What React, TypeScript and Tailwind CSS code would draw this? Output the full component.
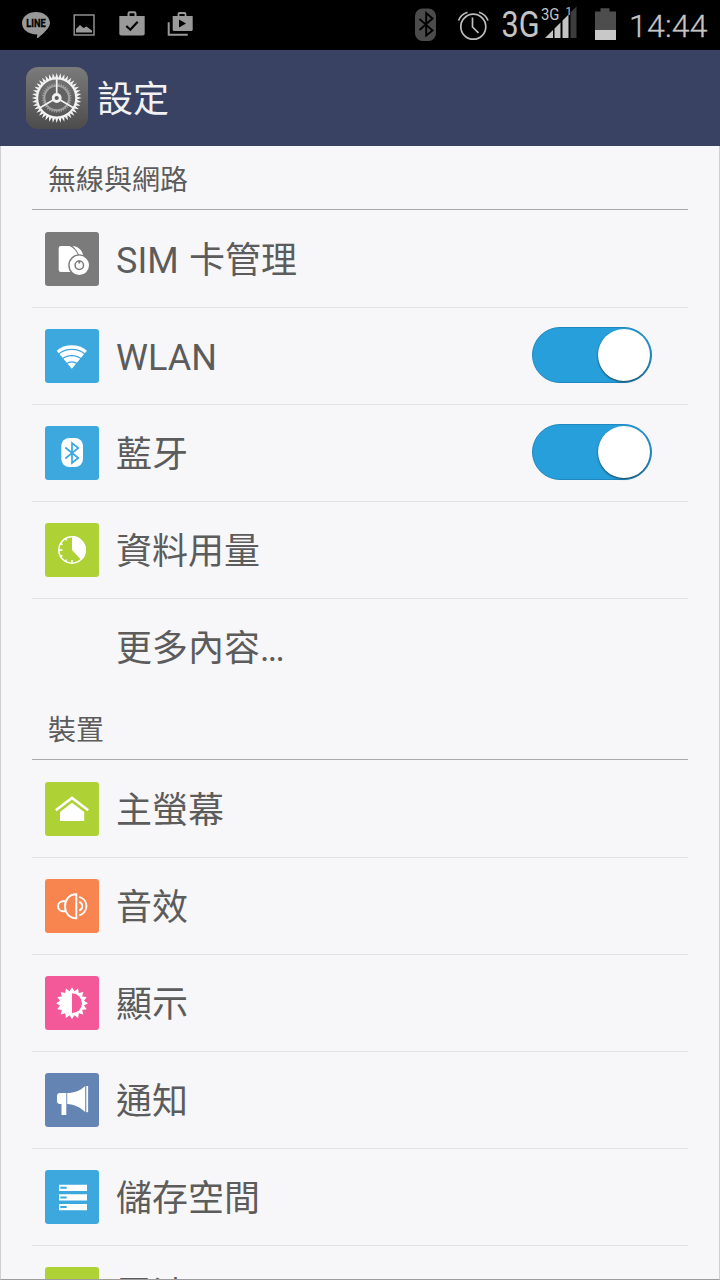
import type { ReactNode } from 'react';

const toothPoints = (cx: number, cy: number, outer: number, inner: number, teeth: number) =>
  Array.from({ length: teeth * 2 }, (_, i) => {
    const r = i % 2 === 0 ? outer : inner;
    const a = (Math.PI * i) / teeth - Math.PI / 2;
    return `${(cx + r * Math.cos(a)).toFixed(2)},${(cy + r * Math.sin(a)).toFixed(2)}`;
  }).join(' ');

const StatusBar = () => (
  <div className="flex h-[50px] shrink-0 items-center bg-black pl-3 pr-3">
    {/* Notifications */}
    <svg viewBox="0 0 48 50" className="h-[50px] w-12">
      <path d="M24 12c7.7 0 14 4.8 14 11 0 4.6-6 10-12 14.9-.8.5-1.2 0-1-.9l.3-2.600C16 34.300 10 29.500 10 23c0-6.200 6.300-11 14-11z" fill="#999" />
      <text x="14.200" y="26.500" textLength="19.400" lengthAdjust="spacingAndGlyphs" fontSize="10.500" fontWeight="700" className="font-[Roboto,sans-serif]" stroke="#000" strokeWidth="0.300">LINE</text>
    </svg>
    <svg viewBox="0 0 48 50" className="h-[50px] w-12">
      <rect x="14.200" y="15" width="19.800" height="20" fill="none" stroke="#999" strokeWidth="1.400" />
      <path d="M16 32.500v-3.500l4-4 3.500 3 3-1.500 2 1.500 3.500 2.500v2z" fill="#999" />
    </svg>
    <svg viewBox="0 0 48 50" className="h-[50px] w-12">
      <path d="M20.500 16v-2.500q0-1.300 1.300-1.300h4.400q1.300 0 1.300 1.300V16" fill="none" stroke="#999" strokeWidth="2" />
      <path d="M11.300 16h25.400v17.500q0 2-2 2H13.300q-2 0-2-2z" fill="#999" />
      <path d="M18.300 26l4 3.800 7.400-8" fill="none" stroke="#000" strokeWidth="2.200" />
    </svg>
    <svg viewBox="0 0 48 50" className="h-[50px] w-12">
      <path d="M22.500 16v-2q0-1 1-1h5q1 0 1 1v2" fill="none" stroke="#999" strokeWidth="1.800" />
      <path d="M16.700 16h20v13.500q0 1.500-1.500 1.500h-17q-1.500 0-1.500-1.500z" fill="#999" />
      <path d="M23 19.500v8l7-4z" fill="#000" />
      <path d="M12.700 22.300v12.500h19" fill="none" stroke="#999" strokeWidth="2" />
    </svg>

    {/* System indicators */}
    <svg viewBox="0 0 48 50" className="ml-auto h-[50px] w-12">
      <rect x="14" y="8.500" width="21" height="32.500" rx="7.500" fill="#4b4b4b" />
      <path d="M18.500 19l13 11.500-6.300 5V13l6.300 5.500-13 11.500" fill="none" stroke="#000" strokeWidth="1.900" />
    </svg>
    <svg viewBox="0 0 48 50" className="h-[50px] w-12">
      <g fill="none" stroke="#bdbdbd" strokeWidth="1.700">
        <circle cx="24.300" cy="26.700" r="12.500" />
        <path d="M9.500 20.500q2-6 9-8.300M30 12.200q7 2.300 9 8.300M23.500 17.500V27l6 5.800" />
      </g>
    </svg>
    <svg viewBox="0 0 84 50" className="h-[50px] w-[84px] font-[Roboto,sans-serif]" fill="#c4c4c4">
      <text x="4.500" y="37.300" fontSize="37" textLength="38" lengthAdjust="spacingAndGlyphs">3G</text>
      <path d="M48 38l8-8v8zM57.500 28.500l6-6V38h-6zM65.500 20.500l6-6V38h-6z" />
      <path d="M73.500 12.500l6-6V38h-6z" fill="#3c3c3c" />
      <text x="44" y="20.300" fontSize="16.500" textLength="18.500" lengthAdjust="spacingAndGlyphs">3G</text>
      <text x="68.500" y="15" fontSize="11.500">1</text>
    </svg>
    <svg viewBox="0 0 48 50" className="h-[50px] w-12">
      <path d="M14 11.500h5.500V8.300h9v3.200H35V31H14z" fill="#4d4d4d" />
      <path d="M14 30h21v10H14z" fill="#c8c8c8" />
    </svg>
    <svg viewBox="0 0 79 50" className="h-[50px] w-[79px]">
      <text x="0" y="36.800" fontSize="32" textLength="78.500" fill="#c4c4c4" className="font-[Roboto,sans-serif] font-light" stroke="#c4c4c4" strokeWidth="0.300">14:44</text>
    </svg>
  </div>
);

const GearIcon = () => (
  <svg viewBox="0 0 62 62" className="size-[62px]">
    <defs>
      <linearGradient id="gearBg" x1="0" y1="0" x2="0" y2="1">
        <stop offset="0" stopColor="#7b7b7b" />
        <stop offset="1" stopColor="#4c4c4c" />
      </linearGradient>
    </defs>
    <rect width="62" height="62" rx="12" fill="url(#gearBg)" />
    <polygon points={toothPoints(30.7, 31, 15.3, 12.8, 36)} fill="#a0a0a0" />
    <circle cx="30.700" cy="31" r="11.300" fill="#626262" />
    <g fill="none" stroke="#f2f2f2">
      <circle cx="30.700" cy="31" r="19.500" strokeWidth="2" />
      <path d="M30.700 27V12M27.200 33L14 40.700M34.200 33l13.200 7.700" strokeWidth="1.700" />
      <circle cx="30.700" cy="31" r="3.500" strokeWidth="2.800" fill="#5c5c5c" />
    </g>
    <path
      fill="#f2f2f2"
      fillRule="evenodd"
      d={`M${toothPoints(30.7, 31, 25, 20, 40).split(' ').join('L')}ZM50.700 31a20 20 0 1 0-40 0a20 20 0 1 0 40 0z`}
    />
  </svg>
);

const SimIcon = () => (
  <>
    <path d="M16 14h8.500c3.500 1.500 7 5 8.300 9v17H16q-2.300 0-2.300-2.300V16.300Q13.700 14 16 14z" />
    <path d="M27.500 14c5 0 10 4 11 10.500h-4c-1.200-4-3.500-7.700-7-10.500z" />
    <circle cx="34.300" cy="33.300" r="10.400" stroke="#7b7b7b" strokeWidth="1.400" />
    <circle cx="34.300" cy="33.300" r="4.200" fill="none" stroke="#7b7b7b" strokeWidth="1.500" />
    <path d="M34.300 28.500v3" stroke="#7b7b7b" strokeWidth="1.800" />
  </>
);

const WlanIcon = () => (
  <>
    <path d="M26.800 39.700L11.700 21.700a23.600 23.600 0 0 1 30.200 0z" />
    <g fill="none" stroke="#3da8de" strokeWidth="1.300">
      <path d="M13 25.600a21 21 0 0 1 27.600 0M16.500 30.600a15.500 15.500 0 0 1 20.600 0M21 35a9.500 9.500 0 0 1 11.600 0" />
    </g>
  </>
);

const BluetoothIcon = () => (
  <>
    <rect x="16.300" y="12" width="21.700" height="29" rx="8" />
    <path d="M20.300 21.500l13 10.500-6.300 5V17l6.300 5-13 10.500" fill="none" stroke="#3da8de" strokeWidth="1.700" />
  </>
);

const UsageIcon = () => (
  <>
    <circle cx="27" cy="27" r="13.200" fill="none" stroke="#fff" strokeWidth="1.500" />
    <path d="M27 27V13a14 14 0 0 1 9.500 24.300z" />
    <path d="M13.500 27h4M27 40.500v-3.500M20.300 15.300l1.300 2.200M15.300 20.300l2.200 1.300M15.300 33.700l2.200-1.300M20.300 38.700l1.300-2.200" stroke="#fff" strokeWidth="1.400" />
  </>
);

const HomeIcon = () => (
  <>
    <path d="M10.800 28.200L27 16l16.200 12.200" fill="none" stroke="#fff" strokeWidth="2.600" />
    <path d="M27 20.800L39.200 30v9H15v-9z" />
  </>
);

const SoundIcon = () => (
  <g fill="none" stroke="#fff" strokeWidth="1.900">
    <path d="M31.300 15.200v24.200C24 39.400 20 33.500 20 27.200s4-12 11.300-12z" />
    <path d="M20.300 22.200h-2.200a5 5 0 0 0 0 10h2.200" />
    <path d="M34.200 17.800a9.600 9.600 0 0 1 0 18.600M34.200 22.800a4.700 4.700 0 0 1 0 8.800" />
  </g>
);

const DisplayIcon = () => (
  <>
    <polygon points={toothPoints(27, 27.2, 16, 12.2, 16)} />
    <path d="M27 17.200a10 10 0 0 1 0 20z" fill="#f35998" />
  </>
);

const NotifyIcon = () => (
  <>
    <path d="M15 20h6.300v22h-4.800V31H15q-3 0-3-3v-5q0-3 3-3z" />
    <path d="M22.200 20c7 0 13.500-2.500 18-7v26c-4.500-4.500-11-7.500-18-8z" />
    <path d="M41.300 13h1.800v26.200h-1.800z" />
  </>
);

const StorageIcon = () => (
  <>
    <path d="M14 14.700h28V21H14zM14 24.300h28v6.200H14zM14 34h28v6.300H14z" />
    <path d="M15.300 16.800h6.400v2h-6.400zM15.300 26.400h6.400v2h-6.400zM15.300 36.100h6.400v2h-6.400z" fill="#3da8de" />
  </>
);

const Toggle = () => (
  <button
    role="switch"
    aria-checked="true"
    className="-mt-0.5 mr-9 ml-auto flex h-14 w-[120px] items-center justify-end rounded-full border border-[#2088c1] bg-[#279fdb] pr-px"
  >
    <span className="-mt-px size-[52px] rounded-full bg-white shadow-[0_1px_2px_rgba(0,0,0,0.6)]" />
  </button>
);

type Item = {
  label: string;
  color?: string;
  icon?: ReactNode;
  toggle?: boolean;
};

const wireless: Item[] = [
  { label: 'SIM 卡管理', color: 'bg-[#7b7b7b]', icon: <SimIcon /> },
  { label: 'WLAN', color: 'bg-[#3da8de]', icon: <WlanIcon />, toggle: true },
  { label: '藍牙', color: 'bg-[#3da8de]', icon: <BluetoothIcon />, toggle: true },
  { label: '資料用量', color: 'bg-[#aed136]', icon: <UsageIcon /> },
  { label: '更多內容...' },
];

const device: Item[] = [
  { label: '主螢幕', color: 'bg-[#aed136]', icon: <HomeIcon /> },
  { label: '音效', color: 'bg-[#f88550]', icon: <SoundIcon /> },
  { label: '顯示', color: 'bg-[#f35998]', icon: <DisplayIcon /> },
  { label: '通知', color: 'bg-[#6485b3]', icon: <NotifyIcon /> },
  { label: '儲存空間', color: 'bg-[#3da8de]', icon: <StorageIcon /> },
  { label: '電池', color: 'bg-[#aed136]' },
];

// The trailing dots sit a little tighter than the rest of the label
const Label = ({ text }: { text: string }) => {
  const dots = text.endsWith('...');
  return (
    <span className="ml-[17px] pt-[3px] text-4xl leading-none whitespace-nowrap [word-spacing:1.5px]">
      {dots ? text.slice(0, -3) : text}
      {dots && <span className="tracking-[-1.8px]">...</span>}
    </span>
  );
};

const Section = ({ title, items }: { title: string; items: Item[] }) => (
  <section>
    <h2 className="mb-px flex h-16 items-center border-b border-[#a9a9ab] pt-1.5 pl-4 text-[28px] leading-none">
      {title}
    </h2>
    <ul>
      {items.map(({ label, color, icon, toggle }) => (
        <li
          key={label}
          className="flex h-[97px] items-center border-b border-[#e2e2e4] pl-[13px] last:border-transparent"
        >
          <div className={`size-[54px] rounded-[3px] ${color ?? ''}`}>
            <svg viewBox="0 0 54 54" className="size-full" fill="#fff">
              {icon}
            </svg>
          </div>
          <Label text={label} />
          {toggle && <Toggle />}
        </li>
      ))}
    </ul>
  </section>
);

const App = () => (
  <div className="flex h-[1280px] w-[720px] flex-col overflow-hidden bg-[#f7f7f9] font-[Roboto,'Noto_Sans_CJK_TC',sans-serif] text-[#5c5c5c]">
    <StatusBar />
    <header className="flex h-24 shrink-0 items-center gap-[9px] bg-[#3a4264] pl-[26px]">
      <GearIcon />
      <h1 className="pt-1 text-4xl leading-none text-[#f2f2f4]">設定</h1>
    </header>
    <main className="min-h-0 flex-1 overflow-hidden border-x border-b border-x-[#cfcfd1] border-b-[#9c9c9c] px-[31px]">
      <Section title="無線與網路" items={wireless} />
      <Section title="裝置" items={device} />
    </main>
  </div>
);

export default App;
